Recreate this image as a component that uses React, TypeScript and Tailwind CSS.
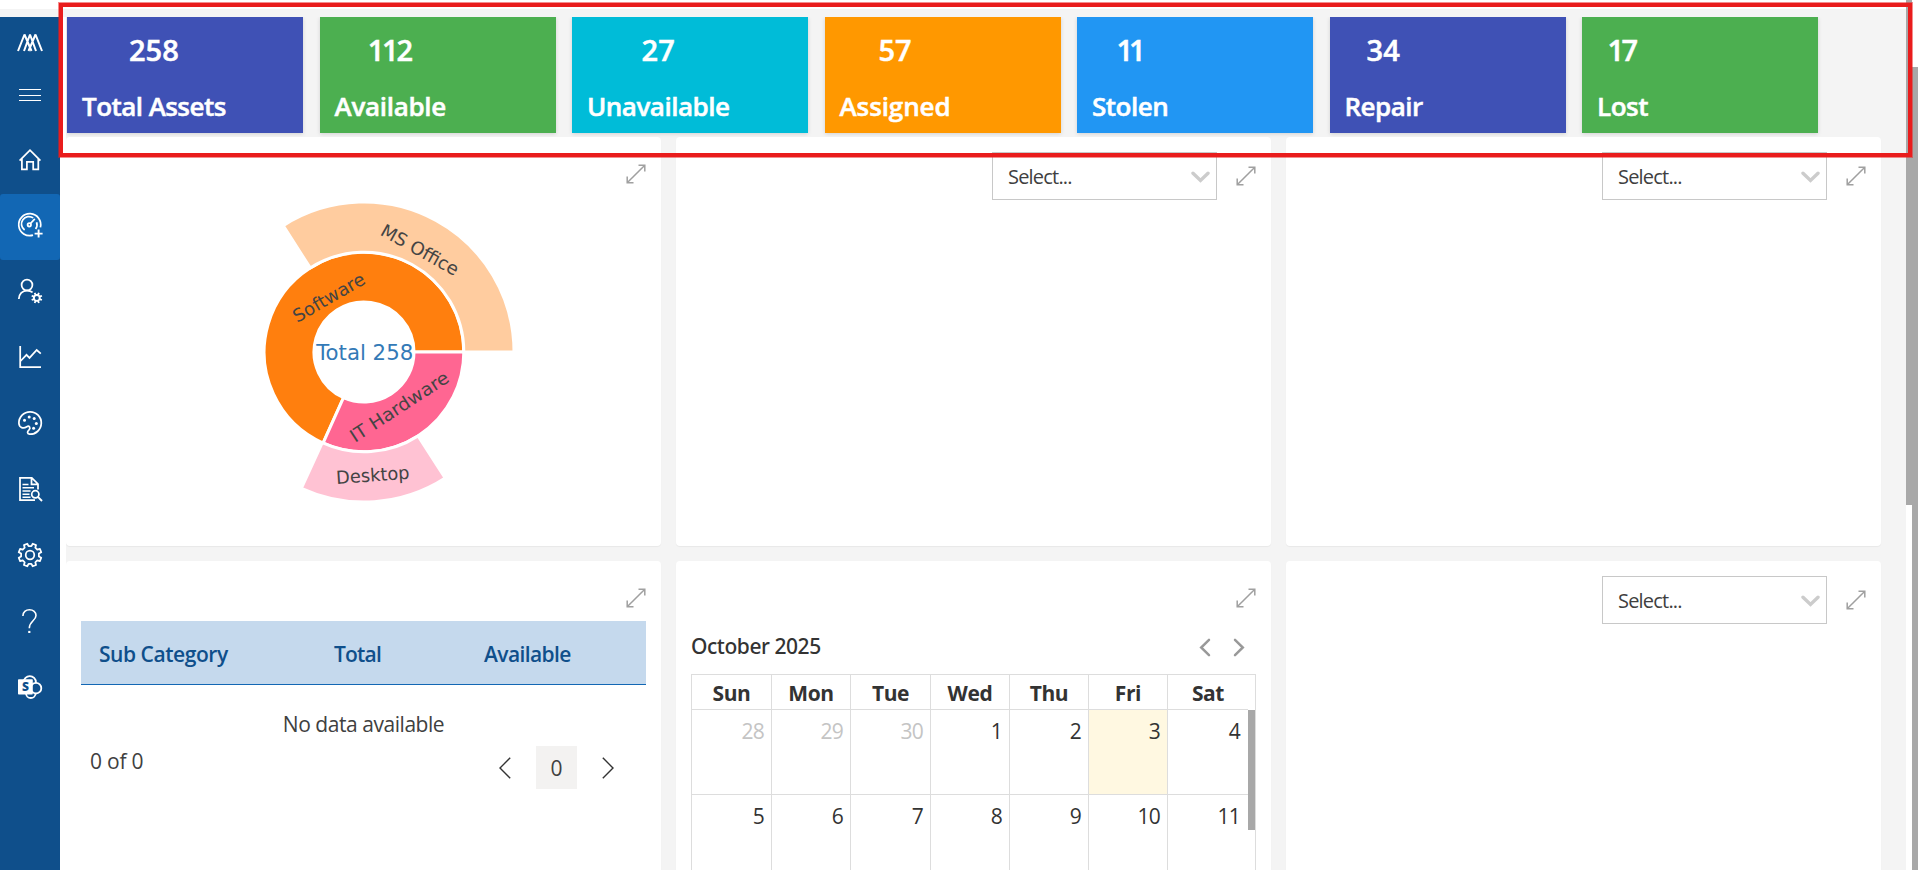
import type { ReactNode } from "react";

const STATS = [
  { value: "258", label: "Total Assets", color: "bg-[#3f51b5]", tracking: "tracking-[-0.55px]", digits: "" },
  { value: "112", label: "Available", color: "bg-[#4caf50]", tracking: "tracking-[-0.3px]", digits: "tracking-[-2.2px] mr-[2px]" },
  { value: "27", label: "Unavailable", color: "bg-[#00bcd8]", tracking: "tracking-[-0.5px]", digits: "" },
  { value: "57", label: "Assigned", color: "bg-[#ff9800]", tracking: "tracking-[-0.1px]", digits: "" },
  { value: "11", label: "Stolen", color: "bg-[#2196f3]", tracking: "tracking-[-0.5px]", digits: "tracking-[-4px] mr-[2px]" },
  { value: "34", label: "Repair", color: "bg-[#3f51b5]", tracking: "tracking-[-0.5px]", digits: "mr-px" },
  { value: "17", label: "Lost", color: "bg-[#4caf50]", tracking: "tracking-[-0.5px]", digits: "tracking-[-2.5px] mr-[2px]" },
];

function gearPath(cx: number, cy: number, outer: number, inner: number, teeth: number) {
  const pts: string[] = [];
  const step = (Math.PI * 2) / teeth;
  for (let i = 0; i < teeth; i++) {
    const a = i * step + step / 2;
    const marks: [number, number][] = [
      [-0.3, inner],
      [-0.2, outer],
      [0.2, outer],
      [0.3, inner],
    ];
    for (const [off, r] of marks) {
      const t = a + off * step;
      pts.push(`${(cx + r * Math.cos(t)).toFixed(2)} ${(cy + r * Math.sin(t)).toFixed(2)}`);
    }
  }
  return `M${pts.join("L")}Z`;
}

function Icon({ children }: { children: ReactNode }) {
  return (
    <svg
      width="24"
      height="24"
      viewBox="0 0 24 24"
      fill="none"
      stroke="#fff"
      strokeWidth="1.75"
      className="overflow-visible"
    >
      {children}
    </svg>
  );
}

const NAV: { name: string; active?: boolean; icon: ReactNode }[] = [
  {
    name: "home",
    icon: (
      <Icon>
        <path d="M1.6 13.6 12 3.2 22.4 13.6M3.9 11.6V22.4H8.9V14.9H15.2V22.4H20.3V11.6" />
      </Icon>
    ),
  },
  {
    name: "dashboard",
    active: true,
    icon: (
      <Icon>
        <path d="M22.4 14.4A11 11 0 1 0 15 22.2" />
        <path d="M6.6 17A7.3 7.3 0 0 1 15.2 4.9M18.6 9.3A7.3 7.3 0 0 1 17.6 16" />
        <circle cx="11.3" cy="11.8" r="1.7" />
        <path d="M12.5 10.5 16.8 5.8" />
        <path d="M20.6 16.6V24.6M16.6 20.6H24.6" strokeWidth="1.9" />
      </Icon>
    ),
  },
  {
    name: "users",
    icon: (
      <Icon>
        <circle cx="9" cy="6" r="5.4" />
        <path d="M.8 20C1 15 4.3 11.5 9 11.5 11.2 11.5 13.2 12.2 14.6 13.4" />
        <path d={gearPath(18.8, 18.9, 5.6, 3.9, 8)} fill="#fff" stroke="none" />
        <circle cx="18.8" cy="18.9" r="2" fill="#0f4f8b" stroke="none" />
      </Icon>
    ),
  },
  {
    name: "reports",
    icon: (
      <Icon>
        <path d="M2.2 1V22.2H23" />
        <path d="M2.6 16 8.5 9.8 11.5 12.9 18.7 5 22.8 8.6" />
      </Icon>
    ),
  },
  {
    name: "appearance",
    icon: (
      <Icon>
        <path d="M.9 12.3A11.2 11.2 0 1 1 11.5 23.2C9 22.7 9 20.5 11 18.8 13 16.8 11.2 14.2 8.8 15.7 5.5 17.9 1.2 17 .9 12.3Z" />
        <g fill="#fff" stroke="none">
          <circle cx="6.5" cy="9.2" r="1.5" />
          <circle cx="11.2" cy="6" r="1.5" />
          <circle cx="16.2" cy="7.6" r="1.5" />
          <circle cx="18.3" cy="12.6" r="1.5" />
          <circle cx="15.6" cy="17.3" r="1.5" />
        </g>
      </Icon>
    ),
  },
  {
    name: "audit",
    icon: (
      <Icon>
        <path d="M17 23.2H2V.8H13.8L20 7V12.5M13.5 .8V7.3H20" />
        <path d="M4.5 7.5H10.5M4.5 10.8H16M4.5 14H12.5M4.5 17.2H11.5M4.5 20.2H12.5" strokeWidth="1.5" />
        <circle cx="17.3" cy="17.3" r="3.6" />
        <path d="M19.9 19.9 24 24" strokeWidth="1.9" />
      </Icon>
    ),
  },
  {
    name: "settings",
    icon: (
      <Icon>
        <path d={gearPath(12, 12, 11.6, 9, 8)} strokeLinejoin="round" />
        <circle cx="12" cy="12" r="4.3" />
      </Icon>
    ),
  },
  {
    name: "help",
    icon: (
      <Icon>
        <path d="M4.9 6.9C4.9 3.2 7.8 .8 11.5 .8 15.2 .8 18 3.2 18 6.5 18 11.8 11.3 12 11.3 19.2" strokeWidth="1.6" />
        <path d="M11.3 21.9V24" strokeWidth="2.2" />
      </Icon>
    ),
  },
  {
    name: "sharepoint",
    icon: (
      <Icon>
        <g strokeWidth="1.8" fill="#0f4f8b">
          <circle cx="11.8" cy="7.2" r="6.1" />
          <circle cx="12.8" cy="18.2" r="4.8" />
          <circle cx="18" cy="13.2" r="5.3" />
        </g>
        <rect x="0" y="4.3" width="14.8" height="15.2" rx="0.8" fill="#fff" stroke="none" />
        <text
          x="7.4"
          y="16.3"
          textAnchor="middle"
          fontSize="12"
          fontWeight="800"
          fill="#0f4f8b"
          stroke="none"
          fontFamily="'Open Sans', sans-serif"
        >
          S
        </text>
      </Icon>
    ),
  },
];

function Sidebar() {
  return (
    <nav className="flex w-[60px] shrink-0 flex-col items-center bg-[#0f4f8b]">
      <div className="mt-4 flex h-5 items-center">
        <svg width="28" height="20" viewBox="0 0 28 20" fill="none" stroke="#fff" strokeWidth="2" strokeLinejoin="bevel">
          <path d="M2 18 8.5 1.5 15.5 18M8 18 14 1.5 20 18M12.5 18 19.5 1.5 26 18" />
        </svg>
      </div>
      <div className="mt-9 flex h-3 w-[22px] flex-col justify-between">
        <span className="h-px w-full bg-white" />
        <span className="h-px w-full bg-white" />
        <span className="h-px w-full bg-white" />
      </div>
      <div className="mt-[27px] flex w-full flex-col">
        {NAV.map((n) => (
          <a
            key={n.name}
            className={
              n.active
                ? "flex h-[66px] items-center justify-center rounded-[3px] bg-[#1267b4] pb-1"
                : "flex h-[66px] items-center justify-center pb-1"
            }
          >
            {n.icon}
          </a>
        ))}
      </div>
    </nav>
  );
}

function StatCard({ value, label, color, tracking, digits }: (typeof STATS)[number]) {
  return (
    <div className={`flex h-[116px] w-[236px] items-start pl-[15px] pt-[13px] font-semibold text-white [-webkit-text-stroke:0.5px_white] shadow-[0_1px_4px_rgba(0,0,0,0.14)] ${color}`}>
      <div className="flex flex-col items-center">
        <span className={`text-[29px] leading-10 ${digits}`}>{value}</span>
        <span className={`mt-4 text-[26px] leading-10 ${tracking}`}>{label}</span>
      </div>
    </div>
  );
}

function ExpandIcon() {
  return (
    <svg width="20" height="20" viewBox="0 0 20 20" fill="none" stroke="#a0a0a0" strokeWidth="1.5">
      <path d="M1.2 18.8 18.8 1.2M12.5 1.2H18.8V7.5M1.2 12.5V18.8H7.5" />
    </svg>
  );
}

function Panel({ select, children }: { select?: boolean; children?: ReactNode }) {
  return (
    <section className="flex flex-col rounded-[4px] bg-white p-[15px] shadow-[0_1px_1px_rgba(0,0,0,0.05)]">
      {select ? (
        <div className="flex h-12 items-center justify-end">
          <div className="mr-[19px] flex h-12 w-[225px] items-center justify-between border border-[#c8c8c8] pl-[15px] pr-[6px] pt-[2px]">
            <span className="text-[20px] leading-none tracking-[-0.8px] text-[#404040]">Select...</span>
            <svg width="19" height="12" viewBox="0 0 19 12" fill="none" stroke="#ccc" strokeWidth="3.4" strokeLinecap="round">
              <path d="M2 2.2 9.5 9.5 17 2.2" />
            </svg>
          </div>
          <ExpandIcon />
        </div>
      ) : (
        <div className="flex h-[45px] items-center justify-end pb-[2px]">
          <ExpandIcon />
        </div>
      )}
      {children}
    </section>
  );
}

function polar(r: number, deg: number) {
  const a = (deg * Math.PI) / 180;
  return `${(r * Math.cos(a)).toFixed(2)} ${(r * Math.sin(a)).toFixed(2)}`;
}

function ring(r0: number, r1: number, from: number, to: number) {
  const large = to - from > 180 ? 1 : 0;
  return `M${polar(r1, from)}A${r1} ${r1} 0 ${large} 1 ${polar(r1, to)}L${polar(r0, to)}A${r0} ${r0} 0 ${large} 0 ${polar(r0, from)}Z`;
}

const SLICES = [
  { d: ring(50, 99.8, 114.2, 360), fill: "#ff7f0e" },
  { d: ring(50, 99.8, 0, 114.2), fill: "#ff6692" },
  { d: ring(99.8, 150, 237.4, 360), fill: "#ffcc9f" },
  { d: ring(99.8, 150, 57.2, 114.7), fill: "#ffc2d3" },
];

const LABELS = [
  { text: "Software", x: -35, y: -54.3, rot: -30, len: 80 },
  { text: "MS Office", x: 55.8, y: -101.9, rot: 29, len: 86 },
  { text: "IT Hardware", x: 35.5, y: 55, rot: -33, len: 114 },
  { text: "Desktop", x: 8.8, y: 123.4, rot: -4, len: 73.5 },
];

function Sunburst() {
  return (
    <svg width="304" height="304" viewBox="-152 -152 304 304" className="mt-[3px] self-center" fontFamily="'DejaVu Sans', Verdana, sans-serif">
      {SLICES.map((s) => (
        <path key={s.d} d={s.d} fill={s.fill} stroke="#fff" strokeWidth="3" />
      ))}
      {LABELS.map((l) => (
        <text
          key={l.text}
          transform={`translate(${l.x} ${l.y}) rotate(${l.rot})`}
          y="6"
          textAnchor="middle"
          textLength={l.len}
          lengthAdjust="spacingAndGlyphs"
          fontSize="18"
          fill="#444"
        >
          {l.text}
        </text>
      ))}
      <text x="0.7" y="7.8" textAnchor="middle" textLength="97" lengthAdjust="spacingAndGlyphs" fontSize="22" fill="#337ab7">
        Total 258
      </text>
    </svg>
  );
}

function PageChevron({ flip }: { flip?: boolean }) {
  return (
    <svg width="12" height="22" viewBox="0 0 12 22" fill="none" stroke="#333" strokeWidth="1.4">
      <path d={flip ? "M.8 .8 11 11 .8 21.2" : "M11.2 .8 1 11 11.2 21.2"} />
    </svg>
  );
}

function AssetTable() {
  return (
    <div className="flex flex-col text-[21px] leading-[30px] text-[#404040]">
      <div className="grid h-16 grid-cols-[235px_150px_1fr] items-center border-b border-[#1267b4] bg-[#c5d9ed] pl-[18px] pt-[2px] font-semibold text-[#0f4f8b]">
        <span className="tracking-[-0.45px]">Sub Category</span>
        <span className="tracking-[-0.8px]">Total</span>
        <span className="tracking-[-0.6px]">Available</span>
      </div>
      <div className="mt-6 text-center tracking-[-0.45px]">No data available</div>
      <div className="mt-[7px] flex h-[43px] items-start justify-between pl-[9px] pr-8">
        <span className="tracking-[-0.2px]">0 of 0</span>
        <div className="flex h-full items-center gap-[25px]">
          <PageChevron />
          <span className="flex h-full w-[41px] items-center justify-center bg-[#f3f2f1] pt-px">0</span>
          <PageChevron flip />
        </div>
      </div>
    </div>
  );
}

const DAYS = ["Sun", "Mon", "Tue", "Wed", "Thu", "Fri", "Sat"];
const DATES = [28, 29, 30, 1, 2, 3, 4, 5, 6, 7, 8, 9, 10, 11];

function Calendar() {
  return (
    <div className="flex flex-col text-[21px] text-[#333]">
      <div className="flex h-[50px] items-center justify-between pr-[11px] pt-[2px]">
        <span className="font-['Noto_Sans'] font-medium tracking-[-0.45px]">October 2025</span>
        <div className="flex gap-[22px]">
          <svg width="12" height="19" viewBox="0 0 12 19" fill="none" stroke="#999" strokeWidth="2.5" strokeLinecap="round">
            <path d="M10 1.8 2.2 9.5 10 17.2" />
          </svg>
          <svg width="12" height="19" viewBox="0 0 12 19" fill="none" stroke="#999" strokeWidth="2.5" strokeLinecap="round">
            <path d="M2 1.8 9.8 9.5 2 17.2" />
          </svg>
        </div>
      </div>
      <div className="mt-[3px] flex border border-b-0 border-[#ddd]">
        <div className="grid w-[556px] grid-cols-[80px_79px_80px_79px_79px_79px_80px]">
          {DAYS.map((d) => (
            <div
              key={d}
              className="h-[35px] border-b border-r border-[#ddd] pt-[2px] text-center font-bold leading-[33px] tracking-[-0.4px] [&:nth-child(7n)]:border-r-0"
            >
              {d}
            </div>
          ))}
          {DATES.map((n, i) => (
            <div
              key={n + "-" + i}
              className={`h-[85px] border-b border-r border-[#ddd] pr-[7px] pt-[7px] text-right leading-7 tracking-[-0.8px] [&:nth-child(7n)]:border-r-0 [&:nth-child(7n)]:pr-[8px] ${
                i < 3 ? "text-[#c4c4c4]" : i === 5 ? "bg-[#fff8e1]" : ""
              }`}
            >
              {n}
            </div>
          ))}
        </div>
        <div className="ml-auto mt-[35px] h-[120px] w-[7px] bg-[#a8a8a8]" />
      </div>
    </div>
  );
}

export default function App() {
  return (
    <div className="relative h-[870px] w-[1918px] overflow-hidden bg-white font-['Open_Sans',sans-serif]">
      <div className="flex h-full">
        <div className="flex w-[1906px] flex-col">
          <div className="mt-[9px] h-2 shrink-0 bg-[#f4f4f4]" />
          <div className="flex min-h-0 flex-1">
            <Sidebar />
            <main className="ml-[6px] flex flex-1 flex-col overflow-hidden bg-[#f4f4f4]">
              <div className="flex shrink-0 gap-[16.5px] pl-px">
                {STATS.map((s) => (
                  <StatCard key={s.label} {...s} />
                ))}
              </div>
              <div className="mt-1 grid grid-cols-[595px_595px_595px] grid-rows-[409px_409px] gap-[15px]">
                <Panel>
                  <Sunburst />
                </Panel>
                <Panel select />
                <Panel select />
                <Panel>
                  <AssetTable />
                </Panel>
                <Panel>
                  <Calendar />
                </Panel>
                <Panel select />
              </div>
            </main>
          </div>
        </div>
        <div className="w-[6px]">
          <div className="h-[505px] bg-[#a8a8a8]" />
        </div>
        <div className="w-[6px] pt-[67px]">
          <div className="h-full bg-[#a8a8a8]" />
        </div>
      </div>
      <div className="pointer-events-none absolute left-[59px] top-[3px] h-[154px] w-[1853px] border-4 border-[#e91c1c] shadow-[0_0_0_1px_rgba(233,28,28,0.5)]" />
    </div>
  );
}
